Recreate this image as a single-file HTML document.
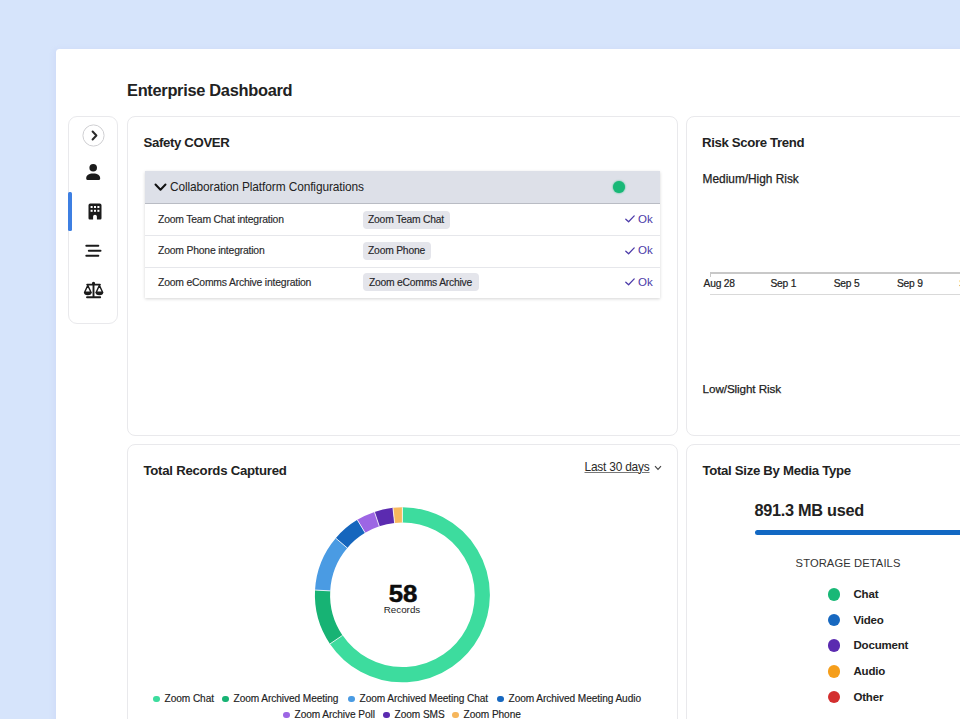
<!DOCTYPE html>
<html><head><meta charset="utf-8">
<style>
*{box-sizing:border-box;margin:0;padding:0}
html,body{width:960px;height:719px;overflow:hidden}
body{background:#d6e4fb;font-family:"Liberation Sans",sans-serif;color:#1a1a1a;position:relative}
.abs{position:absolute}
#panel{left:56.2px;top:48.7px;width:920px;height:700px;background:#fff;border-radius:3.5px 0 0 0;box-shadow:-2px 0 5px rgba(170,170,235,0.13)}
.card{border:1px solid #e9e9ec;border-radius:8px;background:#fff}
.h1{font-weight:bold;font-size:16.4px;letter-spacing:-0.3px;color:#222}
.h2{font-weight:bold;font-size:13.2px;letter-spacing:-0.35px;color:#222}
.t{white-space:nowrap}
.pill{background:#e4e5eb;border-radius:4px;font-size:10.3px;color:#26262a;text-align:center;line-height:17px;letter-spacing:-0.2px;-webkit-text-stroke:0.15px #26262a}
.ax{font-size:10.25px;color:#222;letter-spacing:-0.2px;-webkit-text-stroke:0.2px #222}
.rl{font-size:10.4px;color:#2a2a2c;letter-spacing:-0.2px;-webkit-text-stroke:0.15px #2a2a2c}
.lg{font-size:10.15px;color:#222;letter-spacing:-0.08px;line-height:12px;-webkit-text-stroke:0.15px #222}
</style></head><body>
<div id="panel" class="abs"></div>
<div class="abs h1 t" style="left:127px;top:82px;transform:translateY(-0.6px)">Enterprise Dashboard</div>

<div class="abs card" style="left:68px;top:116px;width:50px;height:208px;border-radius:9px"></div>
<div class="abs" style="left:68.4px;top:192px;width:3.6px;height:39.4px;background:#3d7fe2;border-radius:1.5px"></div>
<svg class="abs" style="left:81.6px;top:123.9px" width="23" height="23" viewBox="0 0 23 23"><circle cx="11.5" cy="11.5" r="10.6" fill="#fff" stroke="#cfcfd2" stroke-width="1"/><path d="M10.6 7.5 L14.4 11.5 L10.6 15.5" fill="none" stroke="#2a2a2a" stroke-width="2" stroke-linecap="round" stroke-linejoin="round"/></svg>
<svg class="abs" style="left:85px;top:163px" width="16" height="18" viewBox="0 0 16 18"><circle cx="8.2" cy="4.7" r="3.8" fill="#1b1b1b"/><path d="M1.2 15.6 C1.2 12.4 3.8 10.6 8.2 10.6 C12.6 10.6 15.2 12.4 15.2 15.6 A1.2 1.2 0 0 1 14 16.9 H2.4 A1.2 1.2 0 0 1 1.2 15.6 Z" fill="#1b1b1b"/></svg>
<svg class="abs" style="left:88.2px;top:203.2px" width="14" height="17" viewBox="0 0 14 17"><path d="M2.3 0.5 H11.7 A1.8 1.8 0 0 1 13.5 2.3 V15.3 A1.2 1.2 0 0 1 12.3 16.5 H8.9 V13.6 A1.9 1.9 0 0 0 5.1 13.6 V16.5 H1.7 A1.2 1.2 0 0 1 0.5 15.3 V2.3 A1.8 1.8 0 0 1 2.3 0.5 Z" fill="#1b1b1b"/><g fill="#fff"><rect x="2.6" y="3" width="2" height="2"/><rect x="6" y="3" width="2" height="2"/><rect x="9.4" y="3" width="2" height="2"/><rect x="2.6" y="6.8" width="2" height="2"/><rect x="6" y="6.8" width="2" height="2"/><rect x="9.4" y="6.8" width="2" height="2"/></g></svg>
<svg class="abs" style="left:80px;top:240px" width="30" height="22" viewBox="80 240 30 22"><g stroke="#1b1b1b" stroke-width="2" stroke-linecap="round"><path d="M86.3 245.7 H98.3"/><path d="M88.8 250.7 H100.5"/><path d="M86.3 255.7 H98.3"/></g></svg>
<svg class="abs" style="left:80px;top:278px" width="30" height="24" viewBox="80 278 30 24">
<g fill="none" stroke="#1b1b1b" stroke-linecap="round" stroke-linejoin="round">
<path d="M93.5 283 V297" stroke-width="1.9"/>
<path d="M87.2 284.6 H99.9" stroke-width="1.9"/>
<path d="M87 297.2 H100.2" stroke-width="1.9"/>
<path d="M87.8 285.4 L84.6 292.3 H91 Z" stroke-width="1.4"/>
<path d="M99.4 285.4 L96.2 292.3 H102.6 Z" stroke-width="1.4"/>
</g>
<circle cx="93.5" cy="283.2" r="1.5" fill="#1b1b1b"/>
<path d="M83.9 292 H91.7 A3.9 3.3 0 0 1 83.9 292 Z" fill="#1b1b1b"/>
<path d="M95.5 292 H103.3 A3.9 3.3 0 0 1 95.5 292 Z" fill="#1b1b1b"/>
</svg>

<div class="abs card" style="left:127px;top:115.5px;width:551px;height:320.5px"></div>
<div class="abs h2 t" style="left:143.5px;top:135px;transform:translateY(-0.5px)">Safety COVER</div>
<div class="abs" id="tbl" style="left:145px;top:171px;width:514.5px;height:127px;background:#fff;box-shadow:0 1px 3px rgba(0,0,0,0.17)">
  <div class="abs" style="left:0;top:0;width:514.5px;height:33px;background:#dde0e8;border-bottom:1px solid #b9bcc4"></div>
  <svg class="abs" style="left:9px;top:12px" width="13" height="9" viewBox="0 0 13 9"><path d="M1.5 1.5 L6.5 6.8 L11.5 1.5" fill="none" stroke="#111" stroke-width="2" stroke-linecap="round" stroke-linejoin="round"/></svg>
  <div class="abs t" style="left:25px;top:9px;font-size:11.9px;color:#222;letter-spacing:-0.1px">Collaboration Platform Configurations</div>
  <div class="abs" style="left:467.8px;top:9.8px;width:12.4px;height:12.4px;border-radius:50%;background:#19b877;box-shadow:0 0 2px #19b877"></div>
  <div class="abs" style="left:0;top:64px;width:514.5px;height:1px;background:#e6e7eb"></div>
  <div class="abs" style="left:0;top:95.5px;width:514.5px;height:1px;background:#e6e7eb"></div>
</div>

<div class="abs t rl" style="left:158px;top:214px">Zoom Team Chat integration</div>
<div class="abs t pill" style="left:362.5px;top:211px;width:87px;height:18px;line-height:17px">Zoom Team Chat</div>
<svg class="abs" style="left:625px;top:215.1px" width="10" height="8" viewBox="0 0 10 8"><path d="M0.8 4.2 L3.6 6.8 L9.2 0.9" fill="none" stroke="#4b3aa8" stroke-width="1.25" stroke-linecap="round" stroke-linejoin="round"/></svg>
<div class="abs t" style="left:638px;top:213px;font-size:11.5px;color:#4b3aa8">Ok</div>
<div class="abs t rl" style="left:158px;top:245px">Zoom Phone integration</div>
<div class="abs t pill" style="left:362.5px;top:242px;width:68px;height:18px;line-height:17px">Zoom Phone</div>
<svg class="abs" style="left:625px;top:246.5px" width="10" height="8" viewBox="0 0 10 8"><path d="M0.8 4.2 L3.6 6.8 L9.2 0.9" fill="none" stroke="#4b3aa8" stroke-width="1.25" stroke-linecap="round" stroke-linejoin="round"/></svg>
<div class="abs t" style="left:638px;top:244px;font-size:11.5px;color:#4b3aa8">Ok</div>
<div class="abs t rl" style="left:158px;top:277px">Zoom eComms Archive integration</div>
<div class="abs t pill" style="left:362.5px;top:273px;width:116px;height:18px;line-height:19px">Zoom eComms Archive</div>
<svg class="abs" style="left:625px;top:277.8px" width="10" height="8" viewBox="0 0 10 8"><path d="M0.8 4.2 L3.6 6.8 L9.2 0.9" fill="none" stroke="#4b3aa8" stroke-width="1.25" stroke-linecap="round" stroke-linejoin="round"/></svg>
<div class="abs t" style="left:638px;top:276px;font-size:11.5px;color:#4b3aa8">Ok</div>
<div class="abs card" style="left:686px;top:115.5px;width:300px;height:320.5px"></div>
<div class="abs h2 t" style="left:702px;top:135px;transform:translateY(-0.5px)">Risk Score Trend</div>
<div class="abs t" style="left:702.6px;top:172px;font-size:11.9px;color:#222;letter-spacing:-0.02px;-webkit-text-stroke:0.25px #222">Medium/High Risk</div>
<div class="abs t" style="left:702.6px;top:382px;font-size:11.7px;color:#222;letter-spacing:-0.1px;-webkit-text-stroke:0.25px #222">Low/Slight Risk</div>
<div class="abs" style="left:710px;top:272.4px;width:260px;height:1.3px;background:#c8c8c8"></div>
<div class="abs" style="left:710px;top:272.4px;width:1.2px;height:5px;background:#c8c8c8"></div>
<div class="abs" style="left:710px;top:293.8px;width:260px;height:1.4px;background:#d9d9d9"></div>

<div class="abs t ax" style="left:689.2px;width:60px;text-align:center;top:278px">Aug 28</div>
<div class="abs t ax" style="left:753.4px;width:60px;text-align:center;top:278px">Sep 1</div>
<div class="abs t ax" style="left:816.6px;width:60px;text-align:center;top:278px">Sep 5</div>
<div class="abs t ax" style="left:879.9px;width:60px;text-align:center;top:278px">Sep 9</div>
<div class="abs t ax" style="left:945px;width:60px;text-align:center;top:278px">Sep 13</div>
<div class="abs card" style="left:127px;top:443.6px;width:551px;height:320px"></div>
<div class="abs h2 t" style="left:143.4px;top:462.5px;letter-spacing:-0.24px">Total Records Captured</div>

<svg class="abs" style="left:0;top:0" width="960" height="719" viewBox="0 0 960 719">
<path d="M402.40 514.90 A79.9 79.9 0 1 1 336.27 639.64" fill="none" stroke="#3ddc9e" stroke-width="15.2"/>
<path d="M336.27 639.64 A79.9 79.9 0 0 1 322.62 590.47" fill="none" stroke="#17b374" stroke-width="15.2"/>
<path d="M322.62 590.47 A79.9 79.9 0 0 1 341.50 543.07" fill="none" stroke="#4a9be3" stroke-width="15.2"/>
<path d="M341.50 543.07 A79.9 79.9 0 0 1 361.21 526.34" fill="none" stroke="#1666bd" stroke-width="15.2"/>
<path d="M361.21 526.34 A79.9 79.9 0 0 1 376.89 519.08" fill="none" stroke="#9d66e4" stroke-width="15.2"/>
<path d="M376.89 519.08 A79.9 79.9 0 0 1 393.76 515.37" fill="none" stroke="#5b2bb0" stroke-width="15.2"/>
<path d="M393.76 515.37 A79.9 79.9 0 0 1 402.40 514.90" fill="none" stroke="#f8b85e" stroke-width="15.2"/>
<path d="M402.40 522.50 L402.40 507.30" stroke="#fff" stroke-width="0.8"/>
<path d="M342.56 635.37 L329.98 643.90" stroke="#fff" stroke-width="0.8"/>
<path d="M330.21 590.89 L315.03 590.06" stroke="#fff" stroke-width="0.8"/>
<path d="M347.30 547.99 L335.71 538.15" stroke="#fff" stroke-width="0.8"/>
<path d="M365.13 532.85 L357.29 519.82" stroke="#fff" stroke-width="0.8"/>
<path d="M379.31 526.28 L374.46 511.88" stroke="#fff" stroke-width="0.8"/>
<path d="M394.58 522.92 L392.94 507.81" stroke="#fff" stroke-width="0.8"/>
</svg>
<div class="abs t" style="left:352.5px;width:100px;text-align:center;top:579.6px;font-size:23.4px;font-weight:bold;color:#0c0c0c;line-height:28px;transform:scaleX(1.1);-webkit-text-stroke:0.5px #0c0c0c">58</div>
<div class="abs t" style="left:352px;width:100px;text-align:center;top:604px;font-size:9.8px;color:#1c1c1c;line-height:12px">Records</div>
<div class="abs t" style="left:584.5px;top:460px;font-size:11.9px;color:#2a2a2a;text-decoration:underline;text-decoration-color:#777;text-decoration-thickness:1px;letter-spacing:-0.2px">Last 30 days</div>
<svg class="abs" style="left:653.6px;top:464.6px" width="8" height="6" viewBox="0 0 8 6"><path d="M1 1.2 L4 4.4 L7 1.2" fill="none" stroke="#444" stroke-width="1.15"/></svg>
<div class="abs" style="left:153.2px;top:695.6px;width:6.4px;height:6.4px;border-radius:50%;background:#3ddc9e"></div><div class="abs t lg" style="left:164.6px;top:693px">Zoom Chat</div>
<div class="abs" style="left:222.2px;top:695.6px;width:6.4px;height:6.4px;border-radius:50%;background:#17b374"></div><div class="abs t lg" style="left:233.6px;top:693px">Zoom Archived Meeting</div>
<div class="abs" style="left:348.2px;top:695.6px;width:6.4px;height:6.4px;border-radius:50%;background:#4a9be3"></div><div class="abs t lg" style="left:359.6px;top:693px">Zoom Archived Meeting Chat</div>
<div class="abs" style="left:497.2px;top:695.6px;width:6.4px;height:6.4px;border-radius:50%;background:#1768c0"></div><div class="abs t lg" style="left:508.6px;top:693px">Zoom Archived Meeting Audio</div>
<div class="abs" style="left:283.2px;top:711.6px;width:6.4px;height:6.4px;border-radius:50%;background:#9d66e4"></div><div class="abs t lg" style="left:294.6px;top:709px">Zoom Archive Poll</div>
<div class="abs" style="left:383.2px;top:711.6px;width:6.4px;height:6.4px;border-radius:50%;background:#5b2bb0"></div><div class="abs t lg" style="left:394.6px;top:709px">Zoom SMS</div>
<div class="abs" style="left:452.2px;top:711.6px;width:6.4px;height:6.4px;border-radius:50%;background:#f6b65c"></div><div class="abs t lg" style="left:463.6px;top:709px">Zoom Phone</div>
<div class="abs card" style="left:686px;top:443.6px;width:300px;height:320px"></div>
<div class="abs h2 t" style="left:702.4px;top:462.5px;letter-spacing:-0.3px">Total Size By Media Type</div>
<div class="abs t" style="left:754.6px;top:501px;font-size:16.3px;font-weight:bold;color:#222;letter-spacing:-0.3px">891.3 MB used</div>
<div class="abs" style="left:755px;top:529.6px;width:220px;height:5.6px;border-radius:3px;background:#1268c3"></div>
<div class="abs t" style="left:795.6px;top:557px;font-size:11.2px;color:#333;letter-spacing:0.1px">STORAGE DETAILS</div>

<div class="abs" style="left:827.6px;top:588.1px;width:12.8px;height:12.8px;border-radius:50%;background:#19b877"></div><div class="abs t" style="left:853.5px;top:588px;font-size:11.5px;font-weight:bold;color:#222;letter-spacing:-0.2px">Chat</div>
<div class="abs" style="left:827.6px;top:613.7px;width:12.8px;height:12.8px;border-radius:50%;background:#1768c0"></div><div class="abs t" style="left:853.5px;top:614px;font-size:11.5px;font-weight:bold;color:#222;letter-spacing:-0.2px">Video</div>
<div class="abs" style="left:827.6px;top:639.3px;width:12.8px;height:12.8px;border-radius:50%;background:#5b2bb0"></div><div class="abs t" style="left:853.5px;top:639px;font-size:11.5px;font-weight:bold;color:#222;letter-spacing:-0.2px">Document</div>
<div class="abs" style="left:827.6px;top:664.9px;width:12.8px;height:12.8px;border-radius:50%;background:#f59e1b"></div><div class="abs t" style="left:853.5px;top:665px;font-size:11.5px;font-weight:bold;color:#222;letter-spacing:-0.2px">Audio</div>
<div class="abs" style="left:827.6px;top:690.5px;width:12.8px;height:12.8px;border-radius:50%;background:#d32f2f"></div><div class="abs t" style="left:853.5px;top:691px;font-size:11.5px;font-weight:bold;color:#222;letter-spacing:-0.2px">Other</div>
</body></html>
